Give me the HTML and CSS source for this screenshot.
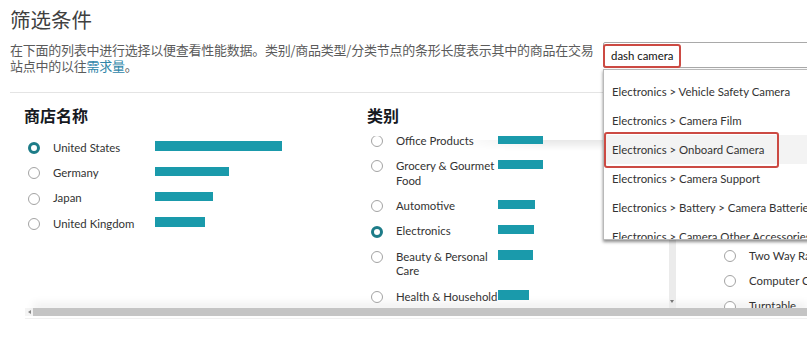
FILE: index.html
```html
<!DOCTYPE html>
<html lang="zh-CN">
<head>
<meta charset="utf-8">
<title>筛选条件</title>
<link rel="stylesheet" href="styles.css">
</head>
<body>
<div class="page">
  <h1 class="title">筛选条件</h1>
  <div class="intro">
    <p class="desc">在下面的列表中进行选择以便查看性能数据。类别/商品类型/分类节点的条形长度表示其中的商品在交易站点中的以往<a class="link" href="#">需求量</a>。</p>
    <div class="search">
      <div class="search-box"><span class="query">dash camera</span></div>
      <span class="mark mark-query"></span>
      <ul class="dropdown">
        <li class="opt">Electronics &gt; Vehicle Safety Camera</li>
        <li class="opt">Electronics &gt; Camera Film</li>
        <li class="opt opt-active">Electronics &gt; Onboard Camera<span class="mark mark-opt"></span></li>
        <li class="opt">Electronics &gt; Camera Support</li>
        <li class="opt">Electronics &gt; Battery &gt; Camera Batteries</li>
        <li class="opt">Electronics &gt; Camera Other Accessories</li>
      </ul>
    </div>
  </div>

  <div class="panel">
    <div class="cols">
      <section class="col">
        <h2 class="col-title">商店名称</h2>
        <ul class="list list-store">
          <li class="row"><span class="radio checked"></span><span class="label">United States</span><span class="bar" style="width:127px"></span></li>
          <li class="row"><span class="radio"></span><span class="label">Germany</span><span class="bar" style="width:74px"></span></li>
          <li class="row"><span class="radio"></span><span class="label">Japan</span><span class="bar" style="width:58px"></span></li>
          <li class="row"><span class="radio"></span><span class="label">United Kingdom</span><span class="bar" style="width:50px"></span></li>
        </ul>
      </section>

      <section class="col">
        <h2 class="col-title">类别</h2>
        <div class="viewport">
          <div class="scroll-area">
            <span class="fade"></span>
            <ul class="list list-category">
              <li class="row"><span class="radio"></span><span class="label">Office Products</span><span class="bar" style="width:45px"></span></li>
              <li class="row"><span class="radio"></span><span class="label">Grocery &amp; Gourmet Food</span><span class="bar" style="width:45px"></span></li>
              <li class="row"><span class="radio"></span><span class="label">Automotive</span><span class="bar" style="width:37px"></span></li>
              <li class="row"><span class="radio checked"></span><span class="label">Electronics</span><span class="bar" style="width:36px"></span></li>
              <li class="row"><span class="radio"></span><span class="label">Beauty &amp; Personal Care</span><span class="bar" style="width:35px"></span></li>
              <li class="row"><span class="radio"></span><span class="label label-nowrap">Health &amp; Household</span><span class="bar" style="width:31px"></span></li>
            </ul>
          </div>
          <div class="vscroll"><span class="vscroll-arrow"></span></div>
        </div>
      </section>

      <section class="col">
        <h2 class="col-title">商品类型</h2>
        <div class="viewport">
          <div class="scroll-area">
            <ul class="list list-type">
              <li class="row"><span class="radio"></span><span class="label label-nowrap">Camera &amp; Photo</span><span class="bar" style="width:60px"></span></li>
              <li class="row"><span class="radio"></span><span class="label label-nowrap">Car Electronics</span><span class="bar" style="width:55px"></span></li>
              <li class="row"><span class="radio"></span><span class="label label-nowrap">Portable Audio</span><span class="bar" style="width:50px"></span></li>
              <li class="row"><span class="radio"></span><span class="label label-nowrap">Headphones</span><span class="bar" style="width:45px"></span></li>
              <li class="row"><span class="radio"></span><span class="label label-nowrap">Home Audio</span><span class="bar" style="width:40px"></span></li>
              <li class="row"><span class="radio"></span><span class="label label-nowrap">Two Way Radios</span><span class="bar" style="width:36px"></span></li>
              <li class="row"><span class="radio"></span><span class="label label-nowrap">Computer Components</span><span class="bar" style="width:33px"></span></li>
              <li class="row"><span class="radio"></span><span class="label label-nowrap">Turntable</span><span class="bar" style="width:30px"></span></li>
            </ul>
          </div>
        </div>
      </section>
    </div>
    <div class="hscroll">
      <span class="hscroll-btn"><span class="hscroll-arrow"></span></span>
      <span class="hscroll-track"></span>
    </div>
  </div>
</div>
</body>
</html>
```

FILE: styles.css
```css
html, body {
  margin: 0;
  background: #fff;
}

body {
  width: 807px;
  height: 343px;
  overflow: hidden;
  font-family: Lato, "Noto Sans CJK SC", sans-serif;
  color: #333;
}

.page {
  padding-left: 10px;
}

.title {
  margin: 0;
  padding-top: 5px;
  font: 400 20.5px/28px "Noto Sans CJK SC", sans-serif;
  color: #404040;
}

.intro {
  display: flex;
  margin-top: 9px;
}

.desc {
  flex: none;
  width: 591px;
  margin: 0;
  font: 400 13px/16px "Noto Sans CJK SC", sans-serif;
  letter-spacing: -0.25px;
  color: #5b5b5b;
}

.link {
  color: #2f86a9;
  text-decoration: none;
}

.search {
  position: relative;
  flex: none;
  width: 230px;
  margin-left: 2px;
}

.search-box {
  display: flex;
  align-items: center;
  height: 26px;
  box-sizing: border-box;
  padding-left: 7px;
  border: 1px solid #a9a9a9;
  border-radius: 2px;
}

.query {
  font-size: 11.4px;
  color: #111;
}

.mark {
  position: absolute;
  box-sizing: border-box;
  border: 2px solid #cc4a43;
  border-radius: 3px;
  pointer-events: none;
}

.mark-query {
  left: 0;
  top: 2px;
  width: 78px;
  height: 24px;
}

.dropdown {
  position: absolute;
  left: 0;
  top: 27px;
  z-index: 5;
  width: 230px;
  height: 171px;
  box-sizing: border-box;
  margin: 0;
  padding: 7.3px 0 0;
  list-style: none;
  overflow: hidden;
  background: #fff;
  border: 1px solid #b9b9b9;
  box-shadow: 0 2px 3px rgba(0, 0, 0, 0.45);
}

.opt {
  position: relative;
  padding: 6px 8px;
  font-size: 11.4px;
  line-height: 17px;
  white-space: nowrap;
  color: #333;
}

.opt-active {
  background: #f3f3f3;
}

.mark-opt {
  left: 0;
  top: -3px;
  bottom: -4px;
  width: 175px;
}

.panel {
  margin-top: 18px;
  border-top: 1px solid #e4e4e4;
}

.cols {
  display: grid;
  grid-template-columns: 343px 353px 343px;
  height: 215px;
  padding-left: 14px;
  overflow: hidden;
}

.col-title {
  margin: 0;
  padding-top: 12px;
  font: 700 16px/20px "Noto Sans CJK SC", sans-serif;
  color: #16191f;
}

.list {
  position: relative;
  margin: 0;
  padding: 0;
  list-style: none;
}

.list-store {
  margin-top: 10.3px;
}

.row {
  display: flex;
  align-items: flex-start;
  padding: 5.45px 0;
  font-size: 11.4px;
  line-height: 14.5px;
  color: #333;
}

.radio {
  flex: none;
  width: 12px;
  height: 12px;
  box-sizing: border-box;
  margin: 1.25px 0 0 4px;
  border: 1px solid #a3a3a3;
  border-radius: 50%;
  background: #fff;
}

.radio.checked {
  border: 3.5px solid #1d7c88;
}

.label {
  flex: none;
  width: 102px;
  margin-left: 13px;
}

.label-nowrap {
  white-space: nowrap;
}

.bar {
  flex: none;
  height: 9.5px;
  margin-top: 0.5px;
  background: #1a9aab;
}

.viewport {
  display: flex;
  width: 310px;
  height: 172px;
  margin-top: 11px;
}

.scroll-area {
  position: relative;
  flex: 1;
  overflow: hidden;
}

.list-category {
  margin-top: -7.7px;
}

.list-type {
  margin-top: -19.7px;
}

.fade {
  position: absolute;
  top: 4px;
  left: 90px;
  right: 0;
  height: 11px;
  background: linear-gradient(rgba(0, 0, 0, 0.09), rgba(0, 0, 0, 0));
  -webkit-mask-image: linear-gradient(to right, transparent, #000 45%);
  mask-image: linear-gradient(to right, transparent, #000 45%);
}

.vscroll {
  position: relative;
  flex: none;
  width: 7px;
  margin-right: 1px;
  background: #ebebeb;
}

.vscroll-arrow {
  position: absolute;
  left: 1px;
  bottom: 5px;
  border-top: 3px solid #777;
  border-left: 2.5px solid transparent;
  border-right: 2.5px solid transparent;
}

.hscroll {
  display: flex;
  height: 8px;
  margin-left: 15px;
  padding-bottom: 2px;
  border-bottom: 1px solid #f0f0f0;
}

.hscroll-btn {
  display: flex;
  align-items: center;
  justify-content: center;
  flex: none;
  width: 8px;
  background: #f4f4f4;
}

.hscroll-arrow {
  border-right: 3px solid #888;
  border-top: 2px solid transparent;
  border-bottom: 2px solid transparent;
}

.hscroll-track {
  flex: 1;
  background: #c4c4c4;
  box-shadow: 0 -5px 8px rgba(0, 0, 0, 0.07);
}
```
